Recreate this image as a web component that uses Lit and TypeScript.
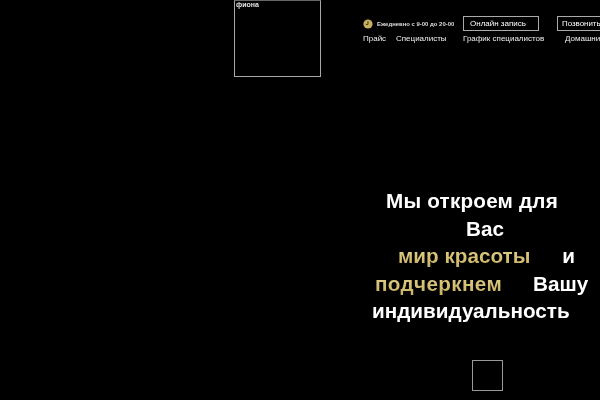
import { LitElement, html, css } from "lit";
import { customElement } from "lit/decorators.js";

@customElement("app-root")
export class AppRoot extends LitElement {
  static styles = css`
    :host {
      display: block;
      width: 600px;
      height: 400px;
      overflow: hidden;
      background: #000;
      color: #fff;
      font-family: "Liberation Sans", Arial, sans-serif;
    }
    .page { width: 600px; height: 400px; overflow: hidden; display: flex; flex-direction: column; }
    .header { display: flex; align-items: flex-start; padding-left: 234px; height: 77px; flex: none; will-change: transform; }
    .logo {
      box-sizing: border-box; width: 87px; height: 77px; flex: none;
      border: 1px solid #a8a8a8; border-top-color: #666;
      font-size: 7px; font-weight: bold; line-height: 8px; padding: 0 0 0 1px;
      color: #e4e4e4;
    }
    .contacts { margin-left: 42px; padding-top: 16px; display: flex; flex-direction: column; flex: none; width: 300px; }
    .row1 { display: flex; align-items: center; height: 15px; }
    .clock { width: 10px; height: 10px; flex: none; margin-right: 4px; }
    .hours { font-size: 5.95px; font-weight: bold; width: 86px; flex: none; color: #ddd; white-space: nowrap; }
    .btn {
      box-sizing: border-box; height: 15px; border: 1px solid #aaa; font-size: 8px; line-height: 13px;
      flex: none; white-space: nowrap; color: #fff;
    }
    .book { width: 76px; padding-left: 6px; }
    .call { width: 60px; padding-left: 4px; margin-left: 18px; font-size: 7.9px; }
    .nav { display: flex; font-size: 8px; margin-top: 3px; color: #f0f0f0; white-space: nowrap; line-height: 10px; }
    .nav span { flex: none; }
    .n1 { width: 33px; }
    .n2 { width: 67px; }
    .n3 { width: 102px; }
    .hero {
      margin: 110px 0 0 0; padding-left: 372px;
      font-size: 20.7px; font-weight: bold; line-height: 27.5px; white-space: nowrap; flex: none;
      will-change: transform;
    }
    .line { display: flex; }
    .l1 { padding-left: 14px; letter-spacing: 0.2px; }
    .l2 { padding-left: 94px; }
    .l3 { padding-left: 26px; }
    .l4 { padding-left: 3px; }
    .gold {
      color: #d8c878;
      background: linear-gradient(#eadb95, #c4ac5c);
      -webkit-background-clip: text;
      background-clip: text;
      -webkit-text-fill-color: transparent;
    }
    .g3 { margin-right: 32px; }
    .g4 { margin-right: 31px; letter-spacing: 0.35px; }
    .square { box-sizing: border-box; width: 31px; height: 31px; border: 1px solid #999; margin: 35px 0 0 472px; flex: none; }
  `;

  render() {
    return html`
      <div class="page">
        <div class="header">
          <div class="logo">фиона</div>
          <div class="contacts">
            <div class="row1">
              <svg class="clock" viewBox="0 0 10 10">
                <circle cx="5" cy="5" r="4.6" fill="#c8b060" />
                <path d="M5 2.2V5.4H2.8" fill="none" stroke="#4a3c10" stroke-width="1" />
              </svg>
              <span class="hours">Ежедневно с 9-00 до 20-00</span>
              <span class="btn book">Онлайн запись</span>
              <span class="btn call">Позвонить</span>
            </div>
            <div class="nav">
              <span class="n1">Прайс</span>
              <span class="n2">Специалисты</span>
              <span class="n3">График специалистов</span>
              <span>Домашний</span>
            </div>
          </div>
        </div>
        <div class="hero">
          <div class="line l1">Мы откроем для</div>
          <div class="line l2">Вас</div>
          <div class="line l3"><span class="gold g3">мир красоты</span><span>и</span></div>
          <div class="line l4"><span class="gold g4">подчеркнем</span><span>Вашу</span></div>
          <div class="line">индивидуальность</div>
        </div>
        <div class="square"></div>
      </div>
    `;
  }
}
